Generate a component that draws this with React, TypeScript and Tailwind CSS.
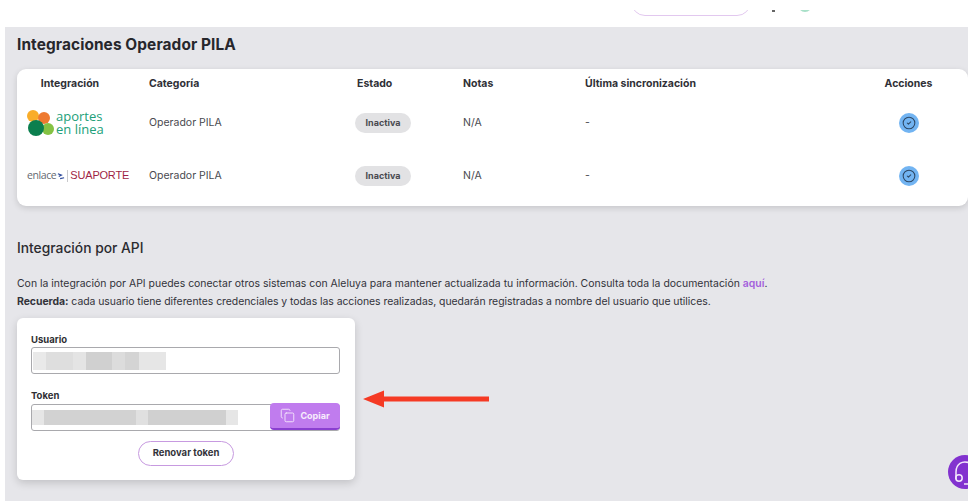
import { Copy, CircleCheck } from "lucide-react";

const rows = ["aportes", "enlace"];

function AportesLogo() {
  return (
    <div className="ml-[10px] flex items-center whitespace-nowrap">
      <svg width="28" height="28" viewBox="0 0 28 28" className="shrink-0">
        <circle cx="6" cy="7" r="6" fill="#f9ad2a" />
        <circle cx="17" cy="9" r="6" fill="#ee7a30" />
        <circle cx="21" cy="20" r="6" fill="#84c243" />
        <circle cx="9" cy="19" r="8" fill="#0b7f4e" />
      </svg>
      <div className="ml-[1px] font-['Open_Sans',sans-serif] text-[13px] leading-[13px] text-[#21a079]">
        aportes
        <br />
        en línea
      </div>
    </div>
  );
}

function EnlaceLogo() {
  return (
    <div className="ml-[10px] flex items-center whitespace-nowrap">
      <span className="font-['Open_Sans',sans-serif] text-[10.5px] tracking-[-0.4px] text-[#666a70]">enlace</span>
      <svg width="8" height="8" viewBox="0 0 9 8" className="ml-[1px]">
        <path d="M1 1.5 5 3 2 4.5M8 6 3.5 7" stroke="#2f4b9b" strokeWidth="1.3" fill="none" />
      </svg>
      <span className="ml-[2px] mr-[2px] h-[12px] w-px bg-[#c9c9cc]" />
      <span className="font-['Liberation_Sans',sans-serif] text-[11px] tracking-[-0.2px] text-[#a01f45]">SUAPORTE</span>
    </div>
  );
}

export default function App() {
  return (
    <div className="relative h-[503px] w-[968px] overflow-hidden bg-white font-['Inter',sans-serif] text-[#2b2b30]">
      <div className="h-[27px] pt-[10px]">
        <div className="flex h-[6px] items-end overflow-hidden pl-[631px]">
          <div className="h-[30px] w-[120px] shrink-0 rounded-[14px] border border-[#e2c8ef]" />
          <div className="mb-[4px] ml-[21px] h-[2px] w-[3px] shrink-0 bg-[#666]" />
          <div className="mb-[4px] ml-[23px] h-[14px] w-[14px] shrink-0 rounded-full bg-[#a8e0c8]" />
        </div>
      </div>

      <main className="ml-[5px] h-[474px] bg-[#e6e6ea] pl-[12px] pt-[9px]">
        <h1 className="text-[15.4px] font-bold leading-[18px] tracking-[0.1px] text-[#27272c]">
          Integraciones Operador PILA
        </h1>

        <div className="mt-[15px] h-[137px] w-[951px] rounded-[9px] bg-white shadow-[0_2px_6px_rgba(0,0,0,0.14)]">
          <table className="w-full table-fixed border-collapse text-[10.5px]">
            <thead>
              <tr className="h-[27px] text-left text-[#303036]">
                <th className="w-[132px] pr-[26px] pt-[3px] text-center font-bold">Integración</th>
                <th className="w-[206px] pt-[3px] font-bold">Categoría</th>
                <th className="w-[108px] pl-[2px] pt-[3px] font-bold">Estado</th>
                <th className="w-[122px] pt-[3px] font-bold">Notas</th>
                <th className="w-[272px] pt-[3px] font-bold">Última sincronización</th>
                <th className="pr-[8px] pt-[3px] text-center font-bold">Acciones</th>
              </tr>
            </thead>
            <tbody>
              {rows.map((row) => (
                <tr key={row} className="h-[53px] text-[#4a4a50]">
                  <td>{row === "aportes" ? <AportesLogo /> : <EnlaceLogo />}</td>
                  <td>Operador PILA</td>
                  <td>
                    <span className="flex h-[20px] w-[56px] items-center justify-center rounded-full bg-[#e2e2e4] text-[9px] font-bold text-[#4a4a50]">
                      Inactiva
                    </span>
                  </td>
                  <td>N/A</td>
                  <td>-</td>
                  <td className="pr-[8px]">
                    <div className="mx-auto flex h-[20px] w-[20px] items-center justify-center rounded-full bg-[#72b4f2]">
                      <CircleCheck size={14} strokeWidth={1.8} color="#2d4764" />
                    </div>
                  </td>
                </tr>
              ))}
            </tbody>
          </table>
        </div>

        <h2 className="mt-[34px] text-[13.8px] font-medium leading-[16px] text-[#2b2b30]">Integración por API</h2>
        <p className="mt-[19px] whitespace-nowrap text-[10.45px] leading-[18px] text-[#33333a]">
          Con la integración por API puedes conectar otros sistemas con Aleluya para mantener actualizada tu información. Consulta toda la documentación{" "}
          <span className="font-semibold text-[#a45fdc]">aquí</span>.
          <br />
          <span className="tracking-[-0.05px]">
            <span className="font-bold">Recuerda:</span> cada usuario tiene diferentes credenciales y todas las acciones realizadas, quedarán registradas a nombre del usuario que utilices.
          </span>
        </p>

        <section className="mt-[7px] h-[162px] w-[338px] rounded-[6px] bg-white px-[14px] pt-[16px] shadow-[0_3px_8px_rgba(0,0,0,0.16)]">
          <label className="block text-[9.5px] font-bold leading-[12px] text-[#2f2f34]">Usuario</label>
          <div className="mt-[1px] flex h-[27px] w-[309px] items-center rounded-[3px] border border-[#a9a9ad]">
            <div className="ml-[1px] flex h-[18px]">
              <div className="w-[13px] bg-[#e9e9e9]" />
              <div className="w-[27px] bg-[#dedede]" />
              <div className="w-[13px] bg-[#e4e4e4]" />
              <div className="w-[26px] bg-[#d0d0d0]" />
              <div className="w-[13px] bg-[#dcdcdc]" />
              <div className="w-[14px] bg-[#d4d4d4]" />
              <div className="w-[27px] bg-[#e6e6e6]" />
            </div>
          </div>

          <label className="mt-[16px] block text-[9.5px] font-bold leading-[12px] text-[#2f2f34]">Token</label>
          <div className="mt-[2px] flex h-[27px] w-[309px] items-center justify-between rounded-[3px] border border-[#a9a9ad]">
            <div className="flex h-[15px]">
              <div className="w-[12px] bg-[#e6e6e6]" />
              <div className="w-[92px] bg-[#d2d2d2]" />
              <div className="w-[12px] bg-[#e0e0e0]" />
              <div className="w-[78px] bg-[#d0d0d0]" />
              <div className="w-[12px] bg-[#e6e6e6]" />
            </div>
            <button className="-mr-px -mt-[2px] flex h-[27px] w-[70px] items-center justify-center gap-[5px] rounded-[4px] border-b-2 border-[#8a3fd0] bg-[#c07cee] text-[9px] font-bold text-[#f7ecfc]">
              <Copy size={15} strokeWidth={1.4} />
              Copiar
            </button>
          </div>

          <button className="mx-auto mt-[10px] block h-[25px] w-[96px] rounded-full border border-[#c79ae0] text-[9.5px] font-bold text-[#33333a]">
            Renovar token
          </button>
        </section>
      </main>

      <svg width="128" height="18" viewBox="0 0 128 18" className="absolute left-[362px] top-[390px]">
        <path d="M1 9 22 .5v6h105v5H22v6z" fill="#f53a24" />
      </svg>

      <div className="absolute left-[948px] top-[455px] h-[34px] w-[34px] rounded-full bg-[#8232cf]">
        <svg width="34" height="34" viewBox="0 0 34 34" fill="none" stroke="#f3e6fb" strokeWidth="1.5">
          <path d="M22 8C14 5 8 9 8 17v7" />
          <circle cx="11" cy="23" r="3.2" />
          <path d="M16 29h6" />
        </svg>
      </div>
    </div>
  );
}
